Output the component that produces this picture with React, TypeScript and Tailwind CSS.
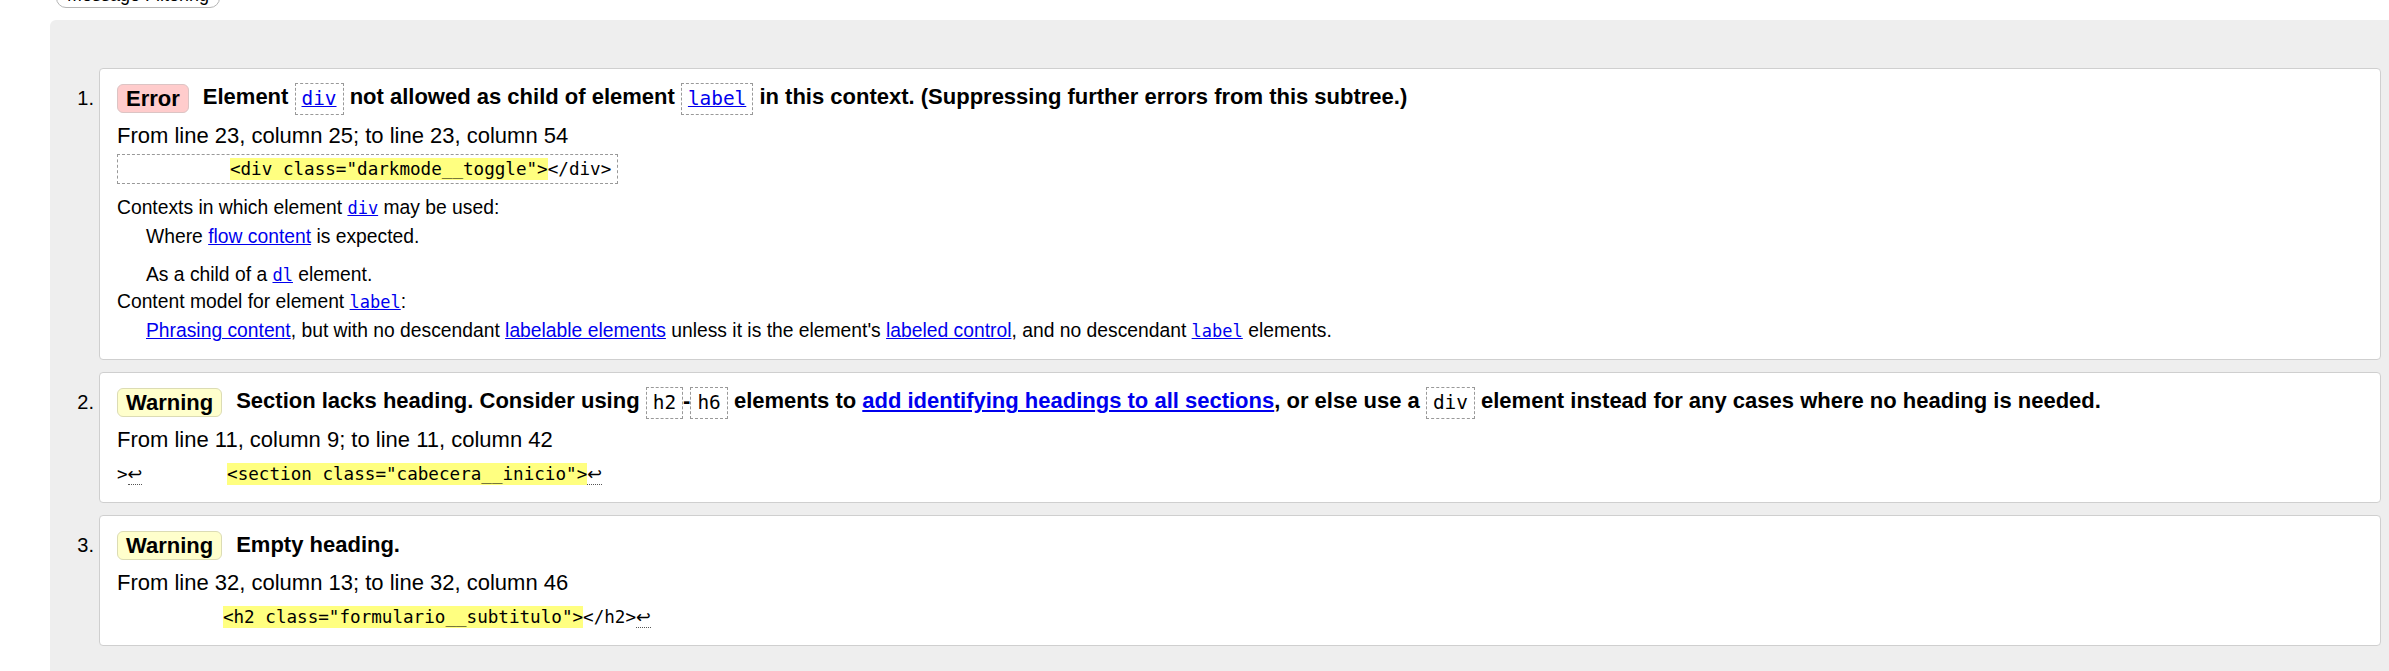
import type { ReactNode } from 'react'

const Link = ({ children, bold }: { children: ReactNode; bold?: boolean }) => (
  <a href="#" className={bold ? "font-bold text-[#0000ee] underline" : "text-[#0000ee] underline"}>
    {children}
  </a>
);

// dashed chip used for element names inside the headline
const Chip = ({ children, link }: { children: ReactNode; link?: boolean }) => (
  <span className="inline-block align-middle border border-dashed border-[#999] px-[6px] leading-[30px] font-['DejaVu_Sans_Mono',monospace] text-[19.4px] font-normal">
    {link ? <a href="#" className="text-[#0000ee] underline">{children}</a> : children}
  </span>
);

const Code = ({ children }: { children: ReactNode }) => (
  <a href="#" className="text-[#0000ee] underline font-['DejaVu_Sans_Mono',monospace] text-[17px]">
    {children}
  </a>
);

const Mark = ({ children }: { children: ReactNode }) => (
  <span className="bg-[#ffff80] py-[1px]">{children}</span>
);

const Lf = () => (
  <span className="border-b border-dotted border-[#555] font-['DejaVu_Sans',sans-serif]">↩</span>
);

const Badge = ({ kind }: { kind: 'Error' | 'Warning' }) => (
  <span
    className={
      kind === 'Error'
        ? "inline-block h-[29px] shrink-0 rounded-[6px] border border-[#dcc4c4] bg-[#ffcccc] px-[8px] text-[22px] font-bold leading-[27px]"
        : "inline-block h-[29px] shrink-0 rounded-[6px] border border-[#dcdcb4] bg-[#ffffcc] px-[8px] text-[22px] font-bold leading-[27px]"
    }
  >
    {kind}
  </span>
);

const Item = ({ n, children }: { n: number; children: ReactNode }) => (
  <li className="flex">
    <div className="w-[49px] shrink-0 pt-[14px] pr-[5px] text-right leading-[32px]">{n}.</div>
    <div className="flex-1 rounded-[4px] border border-[#cfcfcf] bg-white px-[17px] pt-[13px] pb-[16px]">
      {children}
    </div>
  </li>
);

const Headline = ({ kind, children }: { kind: 'Error' | 'Warning'; children: ReactNode }) => (
  <div className="flex h-[32px] items-center whitespace-nowrap">
    <Badge kind={kind} />
    <span className="ml-[14px] text-[22px] font-bold leading-[32px]">{children}</span>
  </div>
);

const Location = ({ children }: { children: ReactNode }) => (
  <p className="mt-[10px] text-[22px] leading-[23px]">{children}</p>
);

export default function App() {
  return (
    <div className="min-h-screen bg-white font-['Liberation_Sans',Arial,sans-serif] text-[20px] text-black">
      <div className="h-[20px] overflow-hidden pl-[56px]">
        <div className="-mt-[22px] flex h-[30px] w-[164px] items-end justify-center rounded-[10px] border border-[#b5b5b5] bg-white pb-[2px] text-[18px] leading-[20px]">
          Message Filtering
        </div>
      </div>

      <div className="ml-[50px] min-h-[651px] rounded-tl-[6px] bg-[#eeeeee] pt-[48px] pr-[8px] pb-[20px]">
        <ol className="flex flex-col gap-[12px]">
          <Item n={1}>
            <Headline kind="Error">
              Element <Chip link>div</Chip> not allowed as child of element <Chip link>label</Chip> in this
              context. (Suppressing further errors from this subtree.)
            </Headline>
            <Location>From line 23, column 25; to line 23, column 54</Location>
            <div className="mt-[7px] w-fit border border-dashed border-[#999] px-[6px] py-[3px] font-['DejaVu_Sans_Mono',monospace] text-[17.6px] leading-[22px] whitespace-pre">
              {'          '}
              <Mark>{'<div class="darkmode__toggle">'}</Mark>
              {'</div>'}
            </div>
            <div className="text-[19.3px]">
              <p className="mt-[12px] leading-[23px]">
                Contexts in which element <Code>div</Code> may be used:
              </p>
              <p className="mt-[5px] ml-[29px] leading-[23px]">
                Where <Link>flow content</Link> is expected.
              </p>
              <p className="mt-[15px] ml-[29px] leading-[23px]">
                As a child of a <Code>dl</Code> element.
              </p>
              <p className="mt-[3px] leading-[23px]">
                Content model for element <Code>label</Code>:
              </p>
              <p className="mt-[5px] ml-[29px] leading-[23px]">
                <Link>Phrasing content</Link>, but with no descendant <Link>labelable elements</Link> unless it
                is the element's <Link>labeled control</Link>, and no descendant <Code>label</Code> elements.
              </p>
            </div>
          </Item>

          <Item n={2}>
            <Headline kind="Warning">
              Section lacks heading. Consider using <Chip>h2</Chip>-<Chip>h6</Chip> elements to{' '}
              <Link bold>add identifying headings to all sections</Link>, or else use a <Chip>div</Chip> element
              instead for any cases where no heading is needed.
            </Headline>
            <Location>From line 11, column 9; to line 11, column 42</Location>
            <p className="mt-[12px] font-['DejaVu_Sans_Mono',monospace] text-[17.6px] leading-[23px] whitespace-pre">
              {'>'}
              <Lf />
              {'        '}
              <Mark>{'<section class="cabecera__inicio">'}</Mark>
              <Lf />
            </p>
          </Item>

          <Item n={3}>
            <Headline kind="Warning">Empty heading.</Headline>
            <Location>From line 32, column 13; to line 32, column 46</Location>
            <p className="mt-[12px] font-['DejaVu_Sans_Mono',monospace] text-[17.6px] leading-[23px] whitespace-pre">
              {'          '}
              <Mark>{'<h2 class="formulario__subtitulo">'}</Mark>
              {'</h2>'}
              <Lf />
            </p>
          </Item>
        </ol>
      </div>
    </div>
  );
}
